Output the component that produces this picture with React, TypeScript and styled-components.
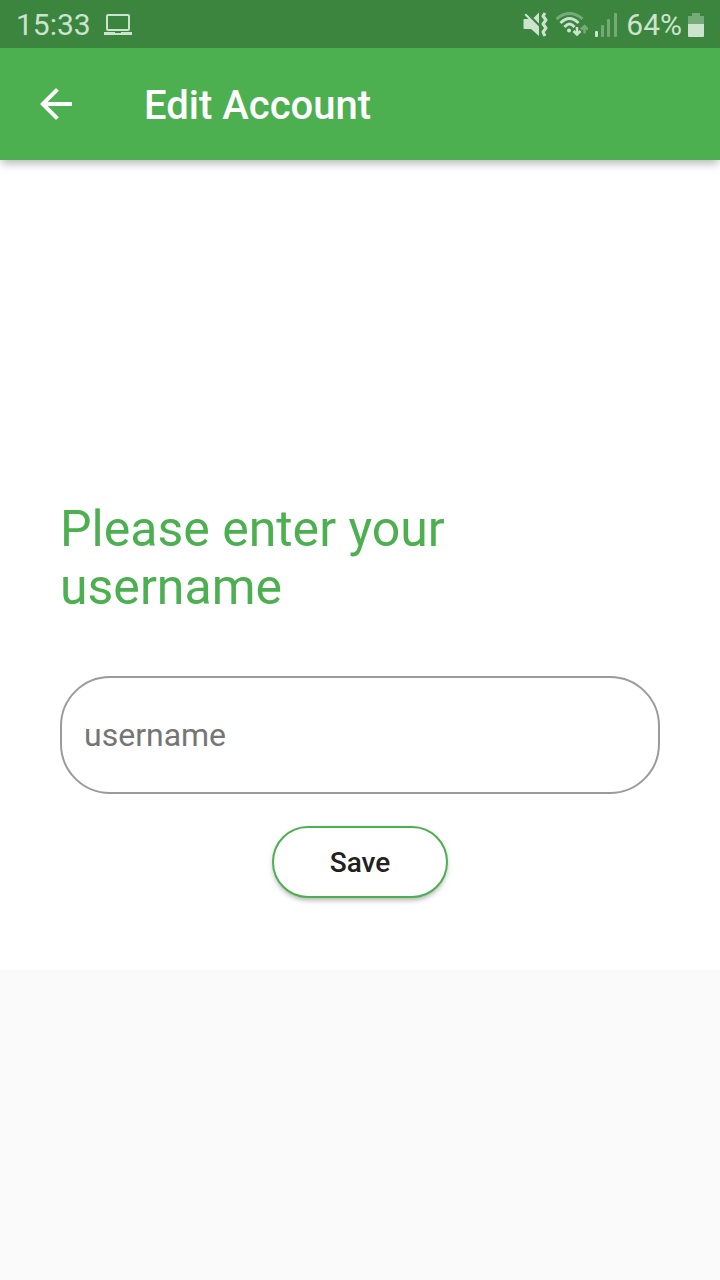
import React from "react";
import styled, { createGlobalStyle } from "styled-components";

const GlobalStyle = createGlobalStyle`
  *, *::before, *::after { box-sizing: border-box; }
  body {
    margin: 0;
    background: #fafafa;
    font-family: Roboto, "Liberation Sans", sans-serif;
  }
`;

const StatusBar = styled.div`
  position: relative;
  z-index: 2;
  display: flex;
  align-items: center;
  justify-content: space-between;
  height: 48px;
  padding: 2px 16px 0;
  background: #3b853e;
  color: #cde3ce;
  font-size: 30px;
  line-height: 40px;
`;

const StatusGroup = styled.div<{ $gap: number }>`
  display: flex;
  align-items: center;
  gap: ${({ $gap }) => $gap}px;
`;

const StatusIcon = styled.svg`
  display: block;
  flex: none;
`;

const AppBar = styled.header`
  position: relative;
  z-index: 1;
  display: flex;
  align-items: center;
  gap: 64px;
  height: 112px;
  padding: 0 32px;
  background: #4caf50;
  color: #fff;
  box-shadow: 0 4px 8px -2px rgba(0, 0, 0, 0.2), 0 6px 10px rgba(0, 0, 0, 0.08),
    0 2px 12px rgba(0, 0, 0, 0.06);
`;

const BackButton = styled.button`
  display: flex;
  padding: 0;
  border: 0;
  background: none;
  color: inherit;
  cursor: pointer;
`;

const Title = styled.h1`
  margin: 0;
  padding-top: 4px;
  font-size: 40px;
  font-weight: 500;
  line-height: 48px;
`;

const Form = styled.form`
  display: flex;
  flex-direction: column;
  padding: 340px 60px 72px;
  background: #fff;
`;

const Prompt = styled.label`
  margin-bottom: 60px;
  color: #4caf50;
  font-size: 50px;
  line-height: 58px;
`;

const TextField = styled.input`
  width: 100%;
  height: 118px;
  margin-bottom: 32px;
  padding: 0 22px;
  border: 2px solid #9b9b9b;
  border-radius: 50px;
  outline: 0;
  background: #fff;
  color: #212121;
  font: 400 32px Roboto, "Liberation Sans", sans-serif;

  &::placeholder {
    color: #757575;
    opacity: 1;
  }
  &:focus {
    border-color: #4caf50;
  }
`;

const SaveButton = styled.button`
  align-self: center;
  width: 176px;
  height: 72px;
  padding: 0;
  border: 2px solid #4caf50;
  border-radius: 36px;
  background: #fff;
  color: #212121;
  font: 500 28px Roboto, "Liberation Sans", sans-serif;
  box-shadow: 0 4px 4px -2px rgba(0, 0, 0, 0.16), 0 3px 5px rgba(0, 0, 0, 0.1),
    0 2px 8px rgba(0, 0, 0, 0.06);
  cursor: pointer;
`;

const LaptopIcon = () => (
  <StatusIcon width="28" height="22" viewBox="0 0 28 22" fill="none">
    <rect x="3" y="1" width="22" height="15" rx="1" stroke="currentColor" strokeWidth="2" />
    <path d="M0 18h11v1h6v-1h11v3H0z" fill="currentColor" />
  </StatusIcon>
);

const MutedIcon = () => (
  <StatusIcon width="26" height="26" viewBox="0 0 26 26" fill="none">
    <path
      d="M1.500 3L3 1.500l13 13V24l-8-7H1.500Q.5 17 .5 16V8q0-1 1-1h4z"
      fill="currentColor"
    />
    <path d="M10.500 6L16 .5v11z" fill="currentColor" />
    <path d="M22 1l-2 3 3 4-3 4 3 4-3 4 2 4" stroke="currentColor" strokeWidth="3" strokeLinejoin="round" />
  </StatusIcon>
);

const WifiIcon = () => (
  <StatusIcon width="32" height="26" viewBox="0 0 32 26" fill="none" stroke="currentColor">
    <path d="M.5 7Q13.500-4 26.500 7" strokeWidth="3" opacity=".4" />
    <path d="M4.500 11Q13.500 2 22.500 11" strokeWidth="3" />
    <path d="M8.500 15Q13.500 9 18.500 15" strokeWidth="3" />
    <circle cx="13" cy="18.500" r="2" fill="currentColor" stroke="none" />
    <path d="M21 15v7.500M17.500 19l3.500 3.500 3.500-3.500" strokeWidth="2.500" />
    <path d="M28.500 21.500V14M25 17.500l3.500-3.500 3.500 3.500" strokeWidth="2.500" opacity=".4" />
  </StatusIcon>
);

const SignalIcon = () => (
  <StatusIcon width="22" height="24" viewBox="0 0 22 24" fill="currentColor">
    <rect x="0" y="18" width="3" height="6" rx="1" />
    <g opacity=".4">
      <rect x="6" y="12" width="3" height="12" rx="1" />
      <rect x="12" y="6" width="3" height="18" rx="1" />
      <rect x="19" y="0" width="3" height="24" rx="1" />
    </g>
  </StatusIcon>
);

const BatteryIcon = () => (
  <StatusIcon width="16" height="24" viewBox="0 0 16 24" fill="currentColor">
    <path d="M4 0h8v3h4v8H0V3h4z" opacity=".4" />
    <path d="M0 11h16v12q0 1-1 1H1q-1 0-1-1z" />
  </StatusIcon>
);

const BackArrow = () => (
  <svg width="48" height="48" viewBox="0 0 24 24" fill="currentColor" aria-hidden="true">
    <path d="M20 11H7.830l5.590-5.590L12 4l-8 8 8 8 1.410-1.410L7.830 13H20v-2z" />
  </svg>
);

export default function App() {
  return (
    <>
      <GlobalStyle />
      <StatusBar>
        <StatusGroup $gap={13}>
          <span>15:33</span>
          <LaptopIcon />
        </StatusGroup>
        <StatusGroup $gap={9}>
          <StatusGroup $gap={7}>
            <MutedIcon />
            <WifiIcon />
            <SignalIcon />
          </StatusGroup>
          <StatusGroup $gap={6}>
            <span>64%</span>
            <BatteryIcon />
          </StatusGroup>
        </StatusGroup>
      </StatusBar>
      <AppBar>
        <BackButton type="button" aria-label="Back">
          <BackArrow />
        </BackButton>
        <Title>Edit Account</Title>
      </AppBar>
      <main>
        <Form onSubmit={(event) => event.preventDefault()}>
          <Prompt htmlFor="username">Please enter your username</Prompt>
          <TextField id="username" name="username" type="text" placeholder="username" />
          <SaveButton type="submit">Save</SaveButton>
        </Form>
      </main>
    </>
  );
}
